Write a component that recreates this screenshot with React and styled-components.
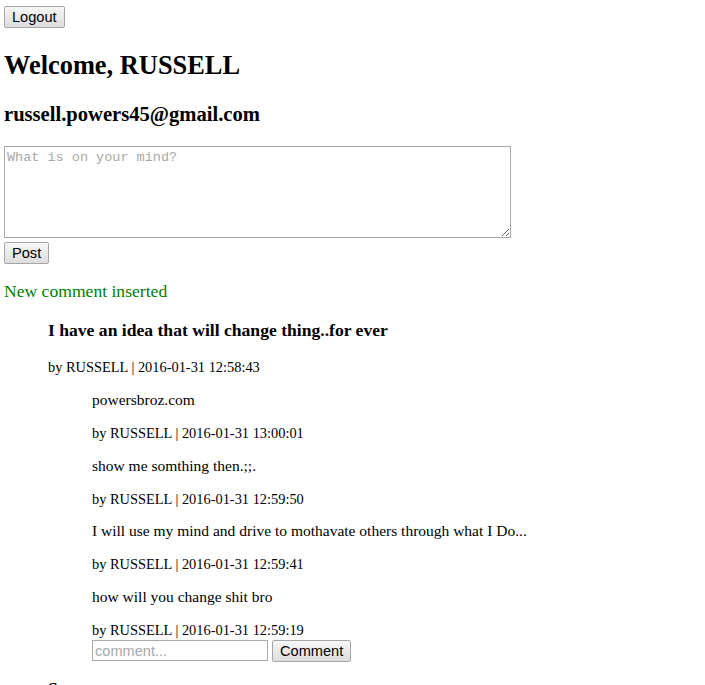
import React from 'react';
import styled, { createGlobalStyle } from 'styled-components';

const comments = [
  { text: 'powersbroz.com', date: '2016-01-31 13:00:01' },
  { text: 'show me somthing then.;;.', date: '2016-01-31 12:59:50' },
  { text: 'I will use my mind and drive to mothavate others through what I Do...', date: '2016-01-31 12:59:41' },
  { text: 'how will you change shit bro', date: '2016-01-31 12:59:19' },
];

const App = () => {
  return (
    <Page>
      <GlobalStyle />
      <div>
        <Button type="button">Logout</Button>
      </div>
      <Welcome>Welcome, RUSSELL</Welcome>
      <Email>russell.powers45@gmail.com</Email>

      <PostForm onSubmit={e => e.preventDefault()}>
        <StatusBox placeholder="What is on your mind?" />
        <Button type="submit">Post</Button>
      </PostForm>

      <Notice>New comment inserted</Notice>

      <Feed>
        <Post>
          <PostTitle>I have an idea that will change thing..for ever</PostTitle>
          <Meta>by RUSSELL | 2016-01-31 12:58:43</Meta>

          <Comments>
            {comments.map(c => (
              <React.Fragment key={c.date}>
                <Line body>{c.text}</Line>
                <Line>by RUSSELL | {c.date}</Line>
              </React.Fragment>
            ))}
          </Comments>

          <CommentForm onSubmit={e => e.preventDefault()}>
            <CommentInput placeholder="comment..." />
            <Button type="submit">Comment</Button>
          </CommentForm>
        </Post>

        <Post>
          <PostTitle>So</PostTitle>
        </Post>
      </Feed>
    </Page>
  );
};

export default App;

// ***********************************************************************************
// Styled Components
// ***********************************************************************************

const GlobalStyle = createGlobalStyle`
  body {
    margin: 0;
    background: #fff;
  }
`;

const Page = styled.div`
  padding: 6px 4px;
  font-family: "Liberation Serif", "Times New Roman", serif;
  color: #000;
`;

const Button = styled.button`
  height: 22px;
  padding: 0 7px;
  font-family: "Liberation Sans", Arial, sans-serif;
  font-size: 14.6px;
  line-height: 20px;
  color: #000;
  background: linear-gradient(#f7f7f7, #dddddd);
  border: 1px solid #a6a6a6;
  border-radius: 2px;
  cursor: pointer;
`;

const Welcome = styled.h2`
  margin: 22px 0;
  font-size: 26.4px;
  line-height: 30px;
  font-weight: bold;
`;

const Email = styled.h3`
  margin: 20px 0;
  font-size: 20.6px;
  line-height: 24px;
  font-weight: bold;
`;

const PostForm = styled.form`
  display: flex;
  flex-direction: column;
  align-items: flex-start;
  gap: 4px;
`;

const StatusBox = styled.textarea`
  box-sizing: border-box;
  width: 507px;
  height: 92px;
  margin: 0;
  padding: 3px 2px;
  border: 1px solid #a9a9a9;
  font-family: "Liberation Mono", "DejaVu Sans Mono", monospace;
  font-size: 13.5px;
  line-height: 16px;

  &::placeholder {
    color: #a9a9a9;
  }
`;

const Notice = styled.div`
  margin: 17px 0 19px;
  font-size: 17.6px;
  line-height: 20px;
  color: #008000;
`;

const Feed = styled.div`
  padding-left: 44px;
`;

const Post = styled.div`
  & + & {
    margin-top: 16px;
  }
`;

const PostTitle = styled.h4`
  margin: 0;
  font-size: 17.6px;
  line-height: 20px;
  font-weight: bold;
`;

const Meta = styled.div`
  margin-top: 19px;
  font-size: 14.4px;
  line-height: 16.8px;
`;

const Comments = styled.div`
  display: flex;
  flex-direction: column;
  gap: 16px;
  margin-top: 16.5px;
  padding-left: 44px;
`;

const Line = styled.div`
  font-size: ${props => (props.body ? '15.5px' : '14.4px')};
  line-height: 16.8px;
`;

const CommentForm = styled.form`
  display: flex;
  align-items: center;
  gap: 4px;
  margin-top: 1px;
  padding-left: 44px;
`;

const CommentInput = styled.input`
  box-sizing: border-box;
  width: 176px;
  height: 21px;
  margin: 0;
  padding: 1px 2px;
  border: 1px solid #a9a9a9;
  font-family: "Liberation Sans", Arial, sans-serif;
  font-size: 14.6px;

  &::placeholder {
    color: #a9a9a9;
  }
`;
